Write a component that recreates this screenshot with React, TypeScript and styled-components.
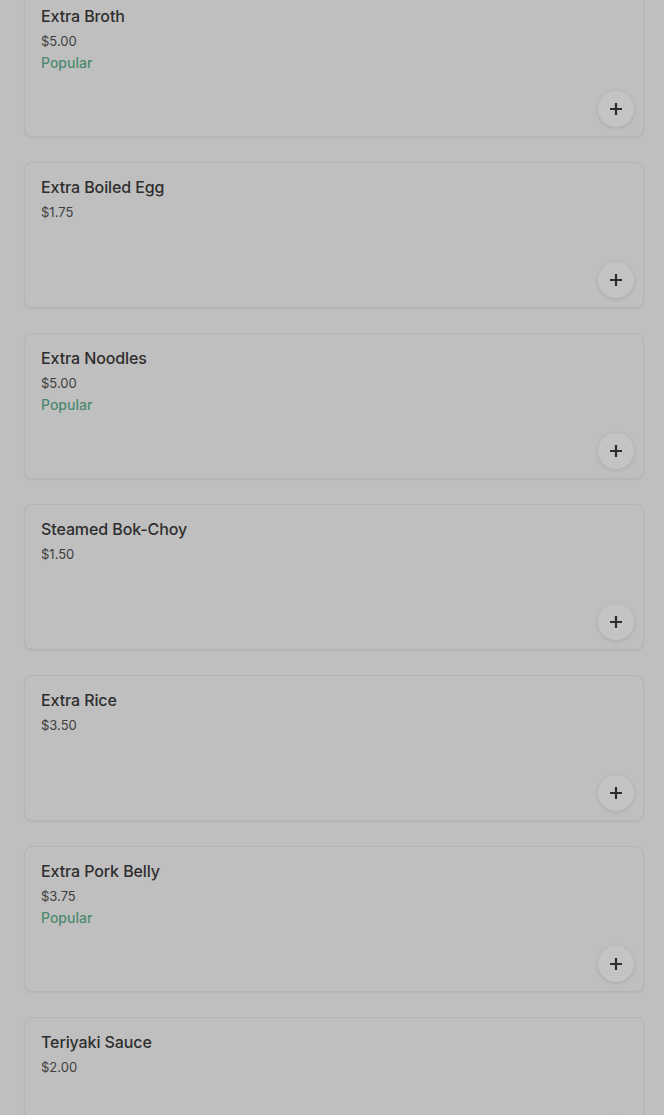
import React from "react";
import styled, { createGlobalStyle } from "styled-components";

const Global = createGlobalStyle`
  html, body { margin: 0; padding: 0; background: #bfbfbf; }
  body { font-family: Inter, "Noto Sans", "Liberation Sans", sans-serif; overflow: hidden; }
`;

const List = styled.div`
  display: flex;
  flex-direction: column;
  gap: 25px;
  padding: 0 20px 0 24px;
  margin-top: -9px;
`;

const Card = styled.div`
  position: relative;
  height: 146px;
  box-sizing: border-box;
  border: 1px solid #b4b4b4;
  border-radius: 8px;
  background: #bfbfbf;
  box-shadow: 0 1px 2px rgba(0, 0, 0, 0.06);
  padding: 14px 16px;
  display: flex;
  flex-direction: column;
`;

const Title = styled.div`
  font-size: 16px;
  font-weight: 500;
  line-height: 20px;
  color: #2e2e2e;
  letter-spacing: -0.1px;
`;

const Price = styled.div`
  margin-top: 5px;
  font-size: 13px;
  line-height: 20px;
  color: #3e3e3e;
`;

const Tag = styled.div`
  margin-top: 2px;
  font-size: 14px;
  font-weight: 500;
  line-height: 20px;
  color: #4c8a6e;
`;

const AddButton = styled.button`
  position: absolute;
  right: 9px;
  bottom: 9px;
  width: 36px;
  height: 36px;
  border-radius: 50%;
  border: none;
  background: #c4c4c4;
  box-shadow: 0 1px 4px rgba(0, 0, 0, 0.12);
  display: flex;
  align-items: center;
  justify-content: center;
  padding: 0;
  cursor: pointer;
`;

const items = [
  { name: "Extra Broth", price: "$5.00", popular: true },
  { name: "Extra Boiled Egg", price: "$1.75", popular: false },
  { name: "Extra Noodles", price: "$5.00", popular: true },
  { name: "Steamed Bok-Choy", price: "$1.50", popular: false },
  { name: "Extra Rice", price: "$3.50", popular: false },
  { name: "Extra Pork Belly", price: "$3.75", popular: true },
  { name: "Teriyaki Sauce", price: "$2.00", popular: false },
];

const Plus = () => (
  <svg width="12" height="12" viewBox="0 0 12 12" aria-hidden>
    <path d="M6 1v10M1 6h10" stroke="#2c2c2c" strokeWidth="2.2" strokeLinecap="square" />
  </svg>
);

export default function App() {
  return (
    <>
      <Global />
      <List>
        {items.map((it) => (
          <Card key={it.name}>
            <Title>{it.name}</Title>
            <Price>{it.price}</Price>
            {it.popular && <Tag>Popular</Tag>}
            <AddButton aria-label={`Add ${it.name}`}>
              <Plus />
            </AddButton>
          </Card>
        ))}
      </List>
    </>
  );
}
